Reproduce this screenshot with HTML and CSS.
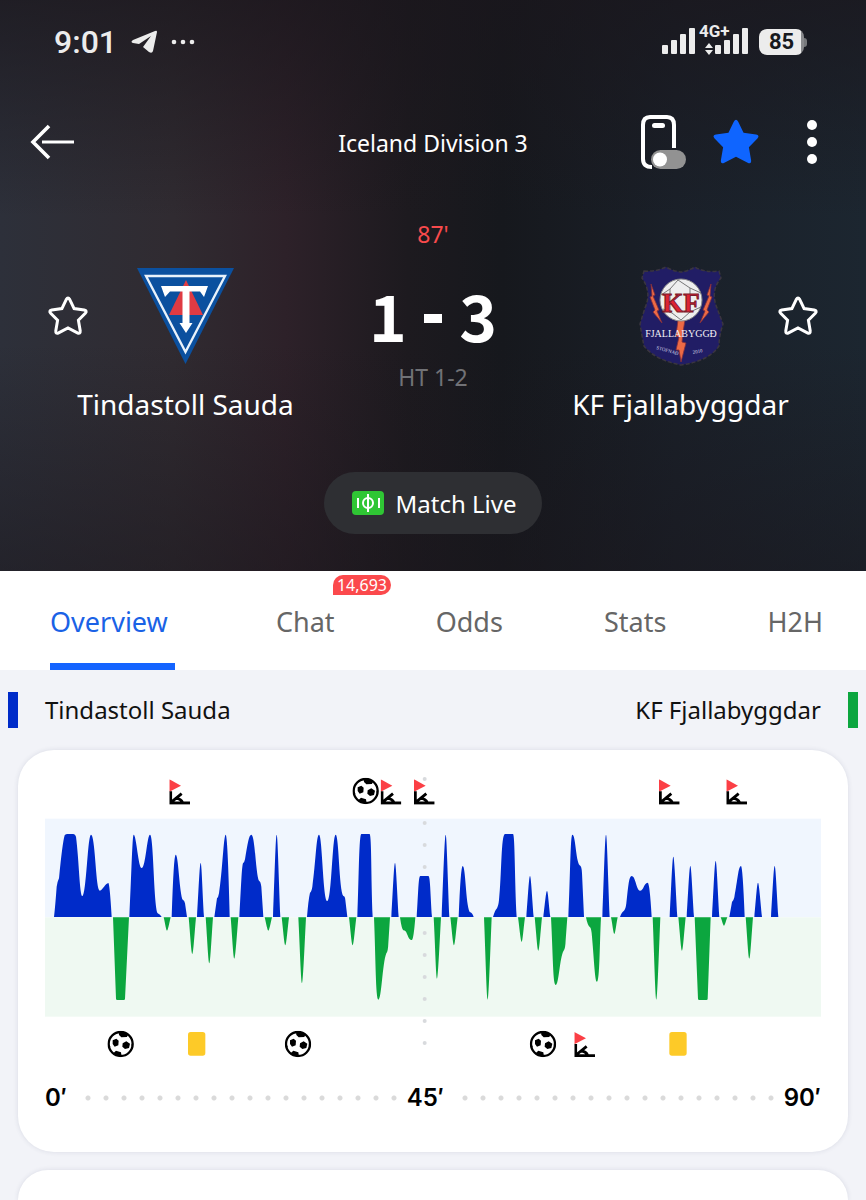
FILE: index.html
```html
<!DOCTYPE html>
<html lang="en">
<head>
<meta charset="utf-8">
<meta name="viewport" content="width=device-width, initial-scale=1">
<title>Tindastoll Sauda - KF Fjallabyggdar</title>
<link rel="stylesheet" href="styles.css">
</head>
<body>
<svg class="defs" aria-hidden="true">
  <defs>
    <symbol id="star" viewBox="0 0 42 42">
      <path d="M19.2 4.6Q21 1.600 22.800 4.600L27.100 13.600L37.200 15Q40.500 15.700 38.300 18.200L31.400 25.200L33.200 35.800Q33.500 39.200 30.400 37.800L21 33L11.600 37.800Q8.500 39.200 8.800 35.800L10.600 25.200L3.700 18.200Q1.500 15.700 4.800 15L14.900 13.600Z"/>
    </symbol>
    <symbol id="corner" viewBox="0 0 62 76">
      <path d="M0 0L35 19L0 37Z" fill="#fb3f45"/>
      <path d="M4 36V71H62M5 69L37 43M20 57Q35 58 40 70" fill="none" stroke="#000" stroke-width="8.500"/>
    </symbol>
    <symbol id="ball" viewBox="0 0 80 80">
      <circle cx="40" cy="40" r="36" fill="#fff" stroke="#000" stroke-width="7"/>
      <path d="M34 2Q52 3 63 10L59 19L42 20L35 13ZM16 29L27 24L34 30L33 44L22 48L16 40ZM46 38L57 32L68 39L65 52L53 55L45 48ZM16 69L26 60L41 65L43 78Q28 78 16 69ZM3 38L9 47L6 56ZM77 32L72 43L76 51Z"/>
    </symbol>
  </defs>
</svg>

<header class="hero">
  <div class="status">
    <div class="status-left">
      <span class="clock">9:01</span>
      <svg width="26" height="24" viewBox="0 0 26 24" aria-hidden="true"><path d="M24 1Q26 0 26 2L22 21Q21 24 18 22L12 17L20 6L8 14L2 13Q-1 12 2 10Z" fill="#ececec"/></svg>
      <svg width="24" height="6" viewBox="0 0 24 6" aria-hidden="true" fill="#ececec"><circle cx="3" cy="3" r="2.300"/><circle cx="12" cy="3" r="2.300"/><circle cx="21" cy="3" r="2.300"/></svg>
    </div>
    <div class="status-right">
      <svg width="88" height="34" viewBox="0 0 88 34" aria-label="Signal 4G+" role="img">
        <g fill="#ececec">
          <rect x="1" y="24" width="6" height="9" rx="1"/><rect x="10" y="19" width="6" height="14" rx="1"/><rect x="19" y="13" width="6" height="20" rx="1"/><rect x="28" y="7" width="6" height="26" rx="1"/>
          <rect x="54" y="24" width="6" height="9" rx="1"/><rect x="63" y="19" width="6" height="14" rx="1"/><rect x="72" y="13" width="6" height="20" rx="1"/><rect x="81" y="7" width="6" height="26" rx="1"/>
          <path d="M44 27L48 22L52 27ZM44 29L48 34L52 29Z"/>
          <text x="38" y="16" class="net">4G+</text>
        </g>
      </svg>
      <span class="battery">85</span>
    </div>
  </div>

  <nav class="topbar">
    <button class="icon-btn back" aria-label="Back">
      <svg width="46" height="36" viewBox="0 0 46 36" fill="none" stroke="#fff"><path d="M19 2L3 18L19 34" stroke-width="3.600"/><path d="M12 18H44" stroke-width="3"/></svg>
    </button>
    <h1 class="league">Iceland Division 3</h1>
    <div class="actions">
      <button class="icon-btn" aria-label="Floating score">
        <svg width="46" height="56" viewBox="0 0 46 56"><path d="M12 53Q3 53 3 45V11Q3 3 10 3H27Q34 3 34 11V34" fill="none" stroke="#fff" stroke-width="4"/><rect x="12" y="9" width="13" height="5" rx="2.500" fill="#fff"/><rect x="11" y="36" width="35" height="19" rx="9.500" fill="#929292"/><circle cx="20" cy="45.500" r="7" fill="#fff"/></svg>
      </button>
      <button class="icon-btn fav" aria-label="Favourite match"><svg width="52" height="52"><use href="#star"/></svg></button>
      <button class="icon-btn" aria-label="More">
        <svg width="12" height="46" viewBox="0 0 12 46" fill="#fff"><circle cx="6" cy="6" r="5"/><circle cx="6" cy="23" r="5"/><circle cx="6" cy="40" r="5"/></svg>
      </button>
    </div>
  </nav>

  <section class="match">
    <div class="team">
      <button class="icon-btn follow left" aria-label="Follow Tindastoll Sauda"><svg width="42" height="42"><use href="#star"/></svg></button>
      <svg class="crest" width="98" height="100" viewBox="0 0 98 100" aria-hidden="true">
        <path d="M0 2H97L48.500 98Z" fill="#0b509f"/>
        <path d="M9 10H88L48.500 86Z" fill="none" stroke="#e9f2fb" stroke-width="2.400"/>
        <path d="M49 14L66 49H32Z" fill="#df3b43"/>
        <path d="M24 20H71L67 31L63 25.500H52.500V57H55.500L49 67L42.500 57H45.500V25.500H33L28 31Z" fill="#fff"/>
      </svg>
      <h2>Tindastoll Sauda</h2>
    </div>
    <div class="centre">
      <p class="minute">87'</p>
      <p class="score"><span class="goals">1</span><span class="dash"></span><span class="goals">3</span></p>
      <p class="half">HT 1-2</p>
    </div>
    <div class="team">
      <button class="icon-btn follow right" aria-label="Follow KF Fjallabyggdar"><svg width="42" height="42"><use href="#star"/></svg></button>
      <svg class="crest" width="98" height="100" viewBox="0 0 98 100" aria-hidden="true">
        <path d="M12 5Q24 6 34 1Q43 6 50 6Q56 5 63 1Q72 7 87 5L89 12Q78 25 85 42L91 58Q87 70 87 80Q77 95 49 99Q23 94 12 80Q10 70 8 58L13 42Q20 26 10 12Z" fill="#211d65" stroke="#3a3540" stroke-width="1.500" stroke-dasharray="4 2"/>
        <path d="M19 18L23 29L21 30L27 44L25 45L30 57L21 46L23 44L18 31L20 30ZM79 18L75 29L77 30L71 44L73 45L68 57L77 46L75 44L80 31L78 30ZM46 54H53L51 66L50 76L54 77L49 96L47 84L44 84L47 71L44 70Z" fill="#ec6a45" stroke="#852e3b" stroke-width=".8"/>
        <circle cx="49" cy="34" r="21" fill="#eee" stroke="#888" stroke-width="1"/>
        <path d="M29 29L38 23L46 14L58 22L69 27M31 43L40 47L49 54L58 46L69 41M38 23V47M58 22V46" fill="none" stroke="#777" stroke-width="1"/>
        <text x="49" y="46" text-anchor="middle" class="crest-kf">KF</text>
        <text x="49" y="71" text-anchor="middle" class="crest-name">FJALLABYGGÐ</text>
        <text x="24" y="83" class="crest-year" transform="rotate(16 24 83)">STOFNAÐ</text>
        <text x="61" y="88" class="crest-year" transform="rotate(-12 61 88)">2010</text>
      </svg>
      <h2>KF Fjallabyggdar</h2>
    </div>
  </section>

  <button class="live">
    <svg width="32" height="24" viewBox="0 0 32 24" aria-hidden="true"><rect width="32" height="24" rx="4" fill="#2fc634"/><g fill="none" stroke="#fff" stroke-width="2"><circle cx="16" cy="12" r="5"/><path d="M16 3V21M6 7V17M27 7V17"/></g></svg>
    Match Live
  </button>
</header>

<nav class="tabs">
  <a href="#overview" class="tab active">Overview</a>
  <a href="#chat" class="tab">Chat<span class="count">14,693</span></a>
  <a href="#odds" class="tab">Odds</a>
  <a href="#stats" class="tab">Stats</a>
  <a href="#h2h" class="tab">H2H</a>
</nav>

<main id="overview">
  <div class="legend"><span class="key home">Tindastoll Sauda</span><span class="key away">KF Fjallabyggdar</span></div>
  <section class="card">
    <svg class="chart" viewBox="0 0 2328 870" role="img" aria-label="Match momentum">
      <rect y="146" width="2328" height="296" fill="#f0f6fe"/>
      <rect y="442" width="2328" height="298" fill="#eff9f2"/>
      <g fill="#d8dadd" id="middle-dots"></g>
      <g fill="#002bc9">
        <path d="M27 441Q31 405 35 350Q36 338 42 325Q52 220 59 196Q62 192 68 192H85Q91 192 93 200C102 270 104 378 112 378C124 378 128 194 138 194C150 194 152 340 162 360C168 370 180 340 190 339Q194 340 200 441Z"/>
        <path d="M253 441C260 300 262 194 266 194C274 194 280 294 290 294C302 294 306 194 315 194C326 194 326 400 338 430Q346 434 350 441Z"/>
        <path d="M380 441Q386 254 392 254C400 254 402 350 412 388Q419 392 420 400L426 441Z"/>
        <path d="M508 441L516 385Q520 382 522 370C532 310 536 194 542 194Q548 194 554 441Z"/>
        <path d="M583 441C588 360 590 290 594 280Q598 278 600 268C608 220 612 194 619 194C630 194 632 310 642 332Q647 334 649 350L655 441Z"/>
        <path d="M786 441Q790 390 795 368Q800 364 802 350C812 280 814 194 822 194C832 194 834 393 847 393C860 393 862 194 872 194C882 194 882 360 895 378Q900 378 901 390L907 441Z"/>
        <path d="M937 441C942 320 942 194 949 192H974C980 200 978 320 983 441Z"/>
        <path d="M1115 441C1120 370 1120 318 1126 318H1150C1156 318 1156 370 1161 441Z"/>
        <path d="M1241 441Q1247 288 1253 288C1262 288 1262 400 1274 426Q1282 428 1286 441Z"/>
        <path d="M1344 441Q1350 420 1355 416Q1360 410 1362 390C1370 320 1368 192 1380 192H1404C1410 192 1409 340 1415 441Z"/>
        <path d="M1570 441C1576 320 1576 194 1582 194C1592 194 1592 270 1604 286Q1610 288 1611 310L1617 441Z"/>
        <path d="M1725 441Q1730 426 1737 422Q1742 418 1744 400C1750 345 1752 318 1760 318C1772 318 1774 362 1785 362C1796 362 1796 340 1808 338Q1814 338 1820 441Z"/>
        <path d="M2053 441L2061 396Q2065 394 2068 382C2078 330 2080 288 2088 288Q2093 288 2099 441Z"/>
        <path id="home-spikes"/>
      </g>
      <g fill="#0ca63f">
        <path d="M204 442L213 686Q213 690 217 690H236Q240 690 240 686L252 442Z"/>
        <path d="M987 442C992 560 992 689 1000 689C1010 689 1012 580 1024 550Q1029 546 1030 520L1035 442Z"/>
        <path d="M1065 442Q1070 478 1075 481Q1083 482 1086 492C1092 506 1094 510 1101 510Q1106 506 1111 442Z"/>
        <path d="M1518 442C1524 560 1524 645 1532 645C1542 645 1544 560 1556 542Q1561 538 1562 510L1567 442Z"/>
        <path d="M1623 442Q1628 468 1635 472Q1639 474 1641 500C1648 580 1650 635 1656 635C1664 635 1664 520 1668 442Z"/>
        <path d="M1949 442L1959 686Q1959 690 1963 690H1984Q1988 690 1988 686L1997 442Z"/>
        <path id="away-spikes"/>
      </g>
      <g>
        <use href="#corner" x="373" y="28" width="62" height="76"/>
        <use href="#ball" x="922" y="23" width="80" height="80"/>
        <use href="#corner" x="1007" y="28" width="62" height="76"/>
        <use href="#corner" x="1107" y="28" width="62" height="76"/>
        <use href="#corner" x="1842" y="28" width="62" height="76"/>
        <use href="#corner" x="2044" y="28" width="62" height="76"/>
        <use href="#ball" x="187" y="782" width="80" height="80"/>
        <rect x="429" y="786" width="52" height="71" rx="8" fill="#fdca28"/>
        <use href="#ball" x="719" y="782" width="80" height="80"/>
        <use href="#ball" x="1454" y="782" width="80" height="80"/>
        <use href="#corner" x="1588" y="786" width="62" height="76"/>
        <rect x="1873" y="786" width="52" height="71" rx="8" fill="#fdca28"/>
      </g>
    </svg>
    <div class="axis"><span>0′</span><i></i><span>45′</span><i></i><span>90′</span></div>
  </section>
  <section class="card next"></section>
</main>
<script src="chart.js"></script>
</body>
</html>
```
FILE: styles.css
```css
* { box-sizing: border-box; }
body {
  margin: 0;
  background: #f2f3f8;
  color: #111;
  font-family: "Noto Sans", "Open Sans", sans-serif;
}
h1, h2, p { margin: 0; font-weight: 400; }
button { font: inherit; color: inherit; cursor: pointer; }
svg { display: block; }
.defs { position: absolute; width: 0; height: 0; }

.hero {
  display: flex;
  flex-direction: column;
  padding-bottom: 37px;
  color: #fff;
  background:
    linear-gradient(180deg, rgba(26, 22, 28, .7), rgba(26, 22, 28, 0) 38%, rgba(26, 22, 28, 0) 60%, rgba(26, 22, 28, .5)),
    linear-gradient(90deg, #2d303a 0, #302b31 20%, #2d2129 33%, #1d1a1f 47%, #16181d 58%, #1a2029 78%, #1c2630 100%);
}
.status {
  display: flex;
  justify-content: space-between;
  align-items: center;
  height: 84px;
  padding: 0 62px 0 54px;
}
.status-left, .status-right { display: flex; align-items: center; }
.status-left { gap: 14px; }
.status-right { gap: 10px; }
.status-right svg { margin-bottom: 8px; }
.clock { font: 500 32px/40px Roboto, sans-serif; color: #ececec; }
.net { font: 700 17px Roboto, sans-serif; }
.battery {
  width: 45px;
  height: 26px;
  border-radius: 8px;
  background: linear-gradient(90deg, #ececec 42px, #88898c 42px);
  color: #17191d;
  font: 700 22px/26px Roboto, sans-serif;
  text-align: center;
  position: relative;
}
.battery::after {
  content: "";
  position: absolute;
  left: 45px;
  top: 9px;
  width: 3px;
  height: 9px;
  border-radius: 0 3px 3px 0;
  background: #77797c;
}

.topbar {
  display: grid;
  grid-template-columns: 1fr auto 1fr;
  align-items: center;
  height: 116px;
  padding: 0 48px 0 30px;
}
.icon-btn { display: block; padding: 0; border: 0; background: none; }
.back { justify-self: start; }
.league { font-size: 23px; line-height: 32px; padding: 2px 0 0 18px; }
.actions { display: flex; align-items: center; justify-content: flex-end; gap: 24px; }
.fav { fill: #0f65ff; }
.actions .icon-btn:last-child { margin-left: 20px; }

.match {
  display: grid;
  grid-template-columns: 1fr 124px 1fr;
  padding-top: 16px;
}
.team {
  display: grid;
  grid-template-columns: 1fr 98px 1fr;
  justify-items: center;
  align-items: center;
  align-content: start;
  row-gap: 16px;
  padding-top: 50px;
}
.team .crest { grid-column: 2; grid-row: 1; }
.team .follow { grid-row: 1; fill: none; stroke: #fff; stroke-width: 3; }
.team .left { grid-column: 1; }
.team .right { grid-column: 3; }
.team h2 { grid-column: 1 / -1; font-size: 28px; line-height: 44px; }
.crest-kf { font: 700 27px "Liberation Serif", serif; fill: #de2432; stroke: #7c1a2a; stroke-width: 1; }
.crest-name { font: 10px "Liberation Serif", serif; fill: #f1eff4; }
.crest-year { font: 5px "Liberation Serif", serif; fill: #dedbe9; }
.centre { display: flex; flex-direction: column; align-items: center; }
.minute { color: #f84a4c; font-size: 23px; line-height: 36px; }
.score {
  display: flex;
  align-items: center;
  justify-content: space-between;
  width: 128px;
  height: 96px;
  margin-top: 18px;
  font: 700 64px/88px "Noto Sans CJK JP", sans-serif;
}
.goals { padding-bottom: 8px; }
.dash { width: 18px; height: 9px; background: #fff; }
.half { color: #717276; font-size: 23px; line-height: 22px; }

.live {
  display: flex;
  align-items: center;
  align-self: center;
  gap: 12px;
  height: 62px;
  margin-top: 46px;
  padding: 0 26px 0 28px;
  border: 0;
  border-radius: 31px;
  background: #2e2f33;
  font-size: 24px;
}

.tabs {
  display: flex;
  justify-content: space-between;
  height: 99px;
  padding: 0 43px 0 50px;
  background: #fff;
}
.tab {
  position: relative;
  display: flex;
  align-items: center;
  padding-top: 8px;
  border-bottom: 7px solid transparent;
  color: #666;
  font-size: 27px;
  text-decoration: none;
}
.tab.active { padding-right: 7px; color: #1a62e6; border-color: #1464ff; }
.count {
  position: absolute;
  left: 57px;
  top: 4px;
  padding: 0 4px;
  border-radius: 10px 10px 10px 0;
  background: #fb494c;
  color: #fff;
  font-size: 16px;
  line-height: 20px;
}

.legend {
  display: flex;
  justify-content: space-between;
  padding: 22px 8px;
}
.key { padding: 0 27px; font-size: 24px; line-height: 36px; }
.home { border-left: 10px solid #002bc9; }
.away { border-right: 10px solid #0ca63f; }
.card {
  margin: 0 18px 18px;
  padding: 20px 27px 36px;
  border-radius: 36px;
  background: #fff;
  box-shadow: 0 0 5px rgba(40, 50, 90, .12);
}
.chart { width: 100%; height: auto; }
.axis {
  display: flex;
  align-items: center;
  margin-top: 20px;
  font: 600 24px/36px Inter, sans-serif;
  color: #000;
}
.axis i {
  flex: 1;
  height: 6px;
  margin: 0 4px 0 12px;
  background: radial-gradient(circle, #dadada 2px, transparent 3px) round;
  background-size: 18px 6px;
}
.next {
  min-height: 30px;
  margin-bottom: 0;
  padding: 0;
  border-radius: 36px 36px 0 0;
}
```
FILE: chart.js
```javascript
// Each spike: start x, peak x, end x, peak y.
const home = [
  [456, 467, 477, 279], [684, 695, 706, 194], [1039, 1050, 1061, 279], [1190, 1202, 1213, 194],
  [1444, 1455, 1466, 318], [1495, 1506, 1516, 363], [1672, 1683, 1694, 194], [1874, 1885, 1897, 260],
  [1925, 1936, 1947, 288], [2001, 2012, 2023, 273], [2128, 2139, 2151, 338], [2178, 2189, 2200, 288]
];
const away = [
  [356, 366, 377, 482], [431, 442, 453, 552], [482, 493, 504, 580], [557, 568, 580, 566],
  [659, 670, 681, 482], [710, 721, 732, 526], [760, 771, 783, 640], [912, 923, 934, 526],
  [1166, 1176, 1188, 626], [1216, 1227, 1238, 526], [1317, 1328, 1340, 689], [1419, 1430, 1440, 516],
  [1469, 1480, 1491, 542], [1698, 1708, 1718, 492], [1823, 1834, 1846, 689], [1900, 1911, 1922, 542],
  [2027, 2037, 2047, 467], [2102, 2113, 2124, 566]
];
function spikes(list, base) {
  return list.map(([a, p, b, y]) => {
    const mid = base + (y - base) * 0.5;
    return `M${a} ${base}C${a + 5} ${mid} ${p - 3} ${y} ${p} ${y}C${p + 3} ${y} ${b - 5} ${mid} ${b} ${base}Z`;
  }).join("");
}
document.getElementById("home-spikes").setAttribute("d", spikes(home, 441));
document.getElementById("away-spikes").setAttribute("d", spikes(away, 442));

const dots = document.getElementById("middle-dots");
for (let y = 27; y < 830; y += 66) {
  if (y === 93) continue;
  const c = document.createElementNS("http://www.w3.org/2000/svg", "circle");
  c.setAttribute("cx", 1139);
  c.setAttribute("cy", y);
  c.setAttribute("r", 6);
  dots.append(c);
}
```
